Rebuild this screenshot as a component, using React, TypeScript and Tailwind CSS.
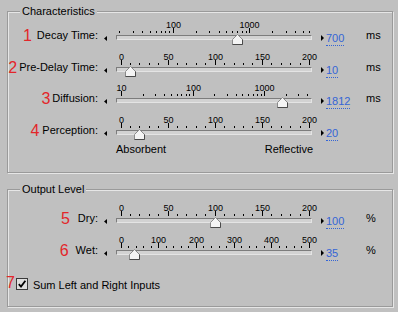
import React from "react";

type Lbl = { v: number; t: string };
type SliderDef = {
  ticks: number[];
  majors: number[];
  labels: Lbl[];
  pos: (v: number) => number;
  value: number;
};

const range = (a: number, b: number, s: number) => {
  const r: number[] = [];
  for (let v = a; v <= b + 1e-9; v += s) r.push(Math.round(v * 1000) / 1000);
  return r;
};

const lin = (min: number, max: number) => (v: number) =>
  4.5 + ((v - min) / (max - min)) * 188.5;

const decayPos = (v: number) => 3.3 + Math.log10(v / 20) * 76.4;
const diffPos = (v: number) => 5 + Math.log10(v / 10) * 71.5;

const decay: SliderDef = {
  ticks: [...range(20, 90, 10), ...range(100, 900, 100), ...range(1000, 6000, 1000)],
  majors: [100, 1000],
  labels: [
    { v: 100, t: "100" },
    { v: 1000, t: "1000" },
  ],
  pos: decayPos,
  value: 700,
};

const diffusion: SliderDef = {
  ticks: [...range(10, 90, 10), ...range(100, 900, 100), ...range(1000, 4000, 1000)],
  majors: [10, 100, 1000],
  labels: [
    { v: 10, t: "10" },
    { v: 100, t: "100" },
    { v: 1000, t: "1000" },
  ],
  pos: diffPos,
  value: 1812,
};

const lin200 = (value: number): SliderDef => ({
  ticks: range(0, 200, 10),
  majors: [0, 50, 100, 150, 200],
  labels: [0, 50, 100, 150, 200].map((v) => ({ v, t: String(v) })),
  pos: lin(0, 200),
  value,
});

const wet: SliderDef = {
  ticks: range(0, 500, 20),
  majors: [0, 100, 200, 300, 400, 500],
  labels: [0, 100, 200, 300, 400, 500].map((v) => ({ v, t: String(v) })),
  pos: lin(0, 500),
  value: 35,
};

function Slider({ def }: { def: SliderDef }) {
  const tx = Math.round(def.pos(def.value));
  return (
    <div className="relative w-[196px] h-full shrink-0">
      <div className="mt-[16px] h-[5px] border-t border-l border-[#7c7c7c] border-b border-b-[#e4e4e4] border-r border-r-[#e4e4e4] bg-[#d2d2d2]" />
      {def.labels.map((l) => (
        <span
          key={l.t}
          className="absolute top-[1px] -translate-x-1/2 whitespace-nowrap text-[9px] leading-[10px] text-black"
          style={{ left: Math.round(def.pos(l.v)) + 0.5 }}
        >
          {l.t}
        </span>
      ))}
      <svg
        className="absolute left-0 top-0"
        width="196"
        height="16"
        shapeRendering="crispEdges"
      >
        {def.ticks.map((v) => {
          const x = Math.round(def.pos(v));
          const major = def.majors.includes(v);
          return (
            <rect
              key={v}
              x={x}
              y={major ? 9 : 12}
              width="1"
              height={major ? 5 : 2}
              fill="#000"
            />
          );
        })}
      </svg>
      <svg
        className="absolute top-[15px]"
        style={{ left: tx - 5 }}
        width="11"
        height="11"
        viewBox="0 0 11 11"
      >
        <polygon
          points="5.5,0.5 10.5,5.5 10.5,10.5 0.5,10.5 0.5,5.5"
          fill="#f4f4f4"
          stroke="#8a8a8a"
          strokeWidth="1"
        />
        <polyline points="10.5,5.5 10.5,10.5 0.5,10.5" fill="none" stroke="#4a4a4a" strokeWidth="1" />
      </svg>
    </div>
  );
}

function Row({
  num,
  numCls,
  label,
  def,
  value,
  unit,
  hCls,
}: {
  num: string;
  numCls: string;
  label: string;
  def: SliderDef;
  value: string;
  unit: string;
  hCls: string;
}) {
  return (
    <div className={`flex items-start ${hCls}`}>
      <div className="w-[90px] shrink-0 flex justify-end items-start">
        <span className={`text-[16px] leading-[16px] text-[#e3262a] mt-[9px] ${numCls}`}>{num}</span>
        <span className="mt-[10px] text-[11px] leading-[13px] whitespace-nowrap">{label}</span>
      </div>
      <div className="w-[18px] shrink-0">
        <svg className="mt-[17px] ml-[6px]" width="3" height="5" viewBox="0 0 3 5">
          <polygon points="3,0 0,2.5 3,5" fill="#000" />
        </svg>
      </div>
      <Slider def={def} />
      <div className="w-[14px] shrink-0">
        <svg className="mt-[16px] ml-[9px]" width="3" height="6" viewBox="0 0 3 6">
          <polygon points="0,0 3,3 0,6" fill="#000" />
        </svg>
      </div>
      <div className="w-[40px] shrink-0">
        <span className="inline-block mt-[13px] text-[11px] leading-[13px] text-[#3465d6] border-b border-dotted border-[#3465d6]">
          {value}
        </span>
      </div>
      <div className="mt-[10px] text-[11px] leading-[13px]">{unit}</div>
    </div>
  );
}

export default function App() {
  return (
    <div className="w-[398px] h-[312px] overflow-hidden bg-[#c0c0c0] pt-[11px] pl-[7px] text-black font-['Liberation_Sans',Arial,sans-serif]">
      <div className="relative w-[386px] h-[162px] border border-[#9a9a9a] shadow-[inset_1px_1px_0_#e6e6e6,1px_1px_0_#e6e6e6]">
        <span className="absolute -top-[7px] left-[12px] px-[2px] bg-[#c0c0c0] text-[11px] leading-[13px]">
          Characteristics
        </span>
        <div className="pt-[7px]">
          <Row num="1" numCls="mr-[5px]" label="Decay Time:" def={decay} value="700" unit="ms" hCls="h-[32px]" />
          <Row num="2" numCls="mr-[2px]" label="Pre-Delay Time:" def={lin200(10)} value="10" unit="ms" hCls="h-[31px]" />
          <Row num="3" numCls="mr-[2px]" label="Diffusion:" def={diffusion} value="1812" unit="ms" hCls="h-[32px]" />
          <Row num="4" numCls="mr-[3px]" label="Perception:" def={lin200(20)} value="20" unit="" hCls="h-[29px]" />
          <div className="ml-[108px] w-[197px] flex justify-between text-[11px] leading-[13px]">
            <span>Absorbent</span>
            <span>Reflective</span>
          </div>
        </div>
      </div>

      <div className="relative mt-[16px] w-[386px] h-[118px] border border-[#9a9a9a] shadow-[inset_1px_1px_0_#e6e6e6,1px_1px_0_#e6e6e6]">
        <span className="absolute -top-[7px] left-[12px] px-[2px] bg-[#c0c0c0] text-[11px] leading-[13px]">
          Output Level
        </span>
        <div className="pt-[12px]">
          <Row num="5" numCls="mr-[8px]" label="Dry:" def={lin200(100)} value="100" unit="%" hCls="h-[32px]" />
          <Row num="6" numCls="mr-[7px]" label="Wet:" def={wet} value="35" unit="%" hCls="h-[41px]" />
          <div className="flex items-start">
            <span className="-ml-[2px] text-[16px] leading-[16px] text-[#e3262a]">7</span>
            <div className="ml-[1px] mt-[3px] w-[12px] h-[12px] border border-[#3a3a3a] bg-[#dedede] flex items-center justify-center">
              <svg width="10" height="10" viewBox="0 0 10 10">
                <path d="M1.8 5.2 L4 7.6 L8.4 1.8" fill="none" stroke="#000" strokeWidth="1.8" />
              </svg>
            </div>
            <span className="ml-[5px] mt-[4px] text-[11px] leading-[13px]">Sum Left and Right Inputs</span>
          </div>
        </div>
      </div>
    </div>
  );
}
